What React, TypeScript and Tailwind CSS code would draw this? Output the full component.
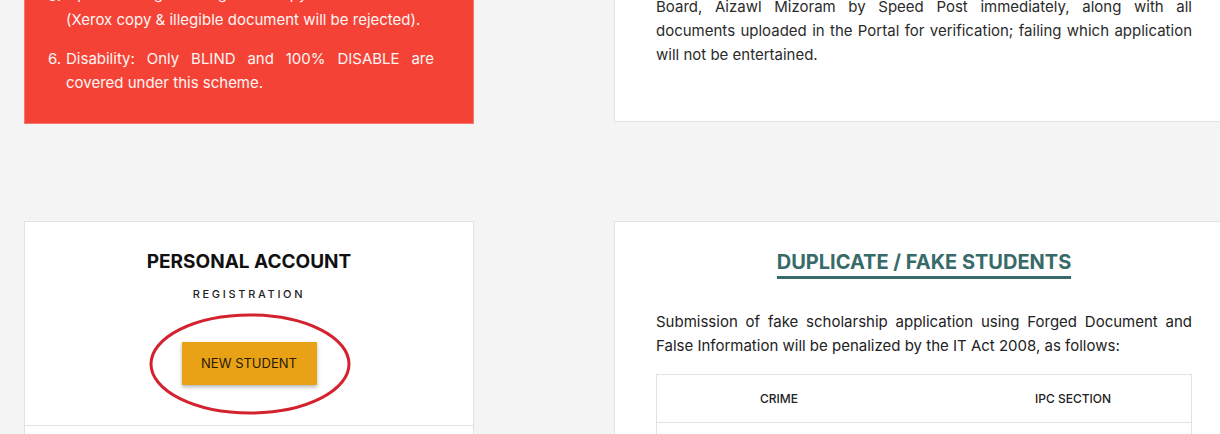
import React from 'react';

// --- Line helper: justified line that keeps its own wrap ---
const JLine = ({ children, last = false, className = '' }: { children: React.ReactNode; last?: boolean; className?: string }) => (
    <span className={(last ? 'block text-left whitespace-nowrap ' : 'block text-justify [text-align-last:justify] whitespace-nowrap ') + className}>{children}</span>
);

const CircleMark = () => (
    <svg
        className="absolute left-[-33px] top-[-29px] pointer-events-none"
        width="202"
        height="102"
        viewBox="0 0 202 102"
        fill="none"
    >
        <ellipse cx="101" cy="51" rx="99" ry="49" stroke="#d3232e" strokeWidth="3" />
    </svg>
);

export default function App() {
    return (
        <div className="w-[1220px] h-[434px] overflow-hidden bg-[#f4f4f4] font-['Inter',sans-serif]">
            <div className="w-[1260px] pl-[24px] -mt-[40px] flex flex-col gap-[97px]">

                {/* Top row */}
                <div className="flex items-start gap-[140px]">
                    <div className="w-[450px] bg-[#f44336] border border-[#f27a70] pt-[15px] pb-[28px] pl-[23px] pr-[39px] text-[15px] leading-[24px] text-[#fff5f4]">
                        <div className="flex">
                            <span className="w-[18px] shrink-0 pt-[8px]">5.</span>
                            <div className="flex-1 min-w-0">
                                <JLine className="leading-[28px] pt-[4px]">Upload original signed copy of Marksheet</JLine>
                                <JLine last>(Xerox copy &amp; illegible document will be rejected).</JLine>
                            </div>
                        </div>
                        <div className="flex mt-[15px]">
                            <span className="w-[18px] shrink-0">6.</span>
                            <div className="flex-1 min-w-0">
                                <JLine>Disability: Only BLIND and 100% DISABLE are</JLine>
                                <JLine last>covered under this scheme.</JLine>
                            </div>
                        </div>
                    </div>

                    <div className="w-[620px] bg-white border border-[#e2e2e2] pt-[10px] pb-[54px] px-[41px] text-[15px] leading-[24px] text-[#2b2b2b]">
                        <JLine>hard copies must be sent to the Scholarship</JLine>
                        <JLine>Board, Aizawl Mizoram by Speed Post immediately, along with all</JLine>
                        <JLine>documents uploaded in the Portal for verification; failing which application</JLine>
                        <JLine last>will not be entertained.</JLine>
                    </div>
                </div>

                {/* Bottom row */}
                <div className="flex items-start gap-[140px]">
                    <div className="w-[450px] bg-white border border-[#e2e2e2]">
                        <div className="flex flex-col items-center pt-[28px] pb-[40px] border-b border-[#e2e2e2]">
                            <h2 className="text-[19px] leading-[24px] font-bold text-[#111]">PERSONAL ACCOUNT</h2>
                            <p className="mt-[12px] text-[11px] leading-[16px] font-medium tracking-[2.7px] text-[#222]">REGISTRATION</p>
                            <div className="relative mt-[40px]">
                                <button className="w-[135px] h-[43px] bg-[#e9a215] text-[13px] text-[#2a1a05] shadow-[0_2px_4px_rgba(0,0,0,0.3)]">
                                    NEW STUDENT
                                </button>
                                <CircleMark />
                            </div>
                        </div>
                        <div className="h-[60px]" />
                    </div>

                    <div className="w-[620px] bg-white border border-[#e2e2e2] px-[41px]">
                        <div className="flex justify-center pt-[28px]">
                            <h2 className="text-[20px] leading-[24px] font-bold text-[#386a6a] border-b-[3px] border-[#386a6a] pb-[2px]">
                                DUPLICATE / FAKE STUDENTS
                            </h2>
                        </div>
                        <div className="mt-[31px] text-[15px] leading-[24px] text-[#222]">
                            <JLine>Submission of fake scholarship application using Forged Document and</JLine>
                            <JLine last>False Information will be penalized by the IT Act 2008, as follows:</JLine>
                        </div>
                        <div className="mt-[16px] border border-[#e2e2e2]">
                            <div className="grid grid-cols-[244px_1fr] h-[48px] items-center border-b border-[#e2e2e2] text-[12px] font-medium text-[#222]">
                                <span className="text-center">CRIME</span>
                                <span className="text-center pl-[54px]">IPC SECTION</span>
                            </div>
                            <div className="h-[60px]" />
                        </div>
                    </div>
                </div>
            </div>
        </div>
    );
}
